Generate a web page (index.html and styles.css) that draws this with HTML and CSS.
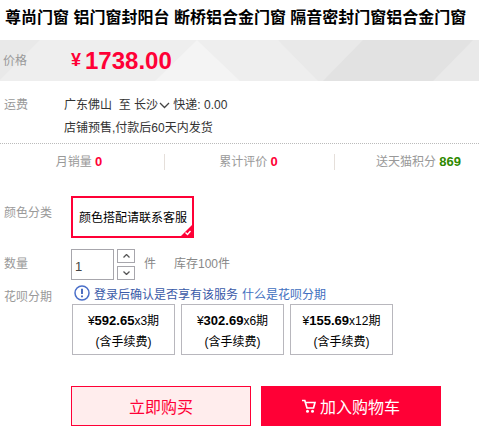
FILE: index.html
```html
<!DOCTYPE html>
<html lang="en">
<head>
    <meta charset="UTF-8">
    <title>尊尚门窗</title>
    <link rel="stylesheet" href="styles.css">
</head>
<body>

    <!-- Title -->
    <h1 class="title">尊尚门窗 铝门窗封阳台 断桥铝合金门窗 隔音密封门窗铝合金门窗</h1>

    <!-- Price -->
    <div class="price-bar">
        <svg class="price-bg" width="479" height="41" viewBox="0 0 479 41">
            <polygon points="0,0 40,0 0,40" fill="#e9e9e9"/>
            <polygon points="155,41 197,0 240,41" fill="#f4f4f4"/>
            <polygon points="278,0 479,0 479,41 318,41" fill="#e9e9e9"/>
            <polygon points="363,0 473,0 433,41 323,41" fill="#e2e2e2"/>
        </svg>
        <span class="price-label">价格</span>
        <span class="price-unit">¥</span>
        <span class="price-num">1738.00</span>
    </div>

    <!-- Shipping -->
    <div class="ship">
        <div class="ship-label">运费</div>
        <div class="ship-info">
            <div class="ship-line">广东佛山&nbsp; 至 长沙<svg class="chev" width="11" height="7" viewBox="0 0 11 7"><path d="M1 1l4.500 4.500L10 1" fill="none" stroke="#444" stroke-width="1.300"/></svg> 快递: 0.00</div>
            <div class="ship-line">店铺预售,付款后60天内发货</div>
        </div>
    </div>

    <!-- Stats -->
    <div class="stats">
        <div class="stat">月销量 <b class="red">0</b></div>
        <div class="stat">累计评价 <b class="red">0</b></div>
        <div class="stat">送天猫积分 <b class="green">869</b></div>
    </div>

    <!-- Color -->
    <div class="row color-row">
        <div class="row-label">颜色分类</div>
        <div class="sku">颜色搭配请联系客服
            <svg class="sku-tick" width="11" height="11" viewBox="0 0 11 11">
                <polygon points="11,0 11,11 0,11" fill="#ff0036"/>
                <path d="M4.500 7.500l2 2 3-3.500" fill="none" stroke="#fff" stroke-width="1.400"/>
            </svg>
        </div>
    </div>

    <!-- Quantity -->
    <div class="row qty-row">
        <div class="row-label">数量</div>
        <div class="qty-input">1</div>
        <div class="qty-btns">
            <div class="qty-btn"><svg width="7" height="4" viewBox="0 0 7 4"><path d="M.5 3.500l3-3 3 3" fill="none" stroke="#555" stroke-width="1.300"/></svg></div>
            <div class="qty-btn"><svg width="7" height="4" viewBox="0 0 7 4"><path d="M.5 .5l3 3 3-3" fill="none" stroke="#555" stroke-width="1.300"/></svg></div>
        </div>
        <span class="qty-unit">件</span>
        <span class="qty-stock">库存100件</span>
    </div>

    <!-- Installments -->
    <div class="row hb-row">
        <div class="row-label">花呗分期</div>
        <div class="hb-main">
            <div class="hb-note">
                <svg width="16" height="16" viewBox="0 0 16 16"><circle cx="8" cy="8" r="7" fill="none" stroke="#4a6fc9" stroke-width="1.500"/><path d="M8 3.800v5.200M8 10.400v1.800" stroke="#2f55b5" stroke-width="1.700"/></svg>
                <span>登录后确认是否享有该服务</span>
                <a href="#">什么是花呗分期</a>
            </div>
            <div class="hb-opts">
                <div class="hb-opt"><div>¥<b>592.65</b>x3期</div><div>(含手续费)</div></div>
                <div class="hb-opt"><div>¥<b>302.69</b>x6期</div><div>(含手续费)</div></div>
                <div class="hb-opt"><div>¥<b>155.69</b>x12期</div><div>(含手续费)</div></div>
            </div>
        </div>
    </div>

    <!-- Buttons -->
    <div class="actions">
        <a href="#" class="btn btn-buy">立即购买</a>
        <a href="#" class="btn btn-cart">
            <svg width="14" height="14" viewBox="0 0 14 14"><path d="M0 1.500h2.800L5 9h6.500L13 3.500H3.500" fill="none" stroke="#fff" stroke-width="1.700"/><circle cx="5.500" cy="12.300" r="1.500" fill="#fff"/><circle cx="10.500" cy="12.300" r="1.500" fill="#fff"/></svg>
            加入购物车
        </a>
    </div>

</body>
</html>
```

FILE: styles.css
```css
* {
    box-sizing: border-box;
}
body {
    font-family: "Liberation Sans", Arial, "Noto Sans CJK SC", sans-serif;
    font-size: 12px;
    color: #333;
    background: #fff;
    margin: 0;
    padding: 0;
    width: 479px;
    height: 436px;
    overflow: hidden;
}
/* Title */
.title {
    margin: 0;
    padding: 7px 0 0 5px;
    height: 40px;
    font-size: 16px;
    line-height: 22px;
    font-weight: bold;
    color: #000;
    white-space: nowrap;
}
/* Price */
.price-bar {
    position: relative;
    display: flex;
    align-items: center;
    height: 41px;
    background: #eeeeee;
    overflow: hidden;
}
.price-bg {
    position: absolute;
    left: 0;
    top: 0;
}
.price-label {
    position: relative;
    width: 71px;
    padding-left: 3px;
    padding-bottom: 2px;
    color: #999;
}
.price-unit {
    position: relative;
    font-size: 18px;
    font-weight: bold;
    color: #ff0036;
    margin-right: 4px;
}
.price-num {
    position: relative;
    font-size: 24px;
    font-weight: bold;
    color: #ff0036;
}
/* Shipping */
.ship {
    display: flex;
    height: 63px;
    padding-top: 13px;
    border-bottom: 1px dotted #bbb;
}
.ship-label {
    width: 64px;
    padding-left: 4px;
    line-height: 22px;
    color: #999;
}
.ship-line {
    line-height: 23px;
    white-space: nowrap;
}
.chev {
    margin-left: 1px;
}
/* Stats */
.stats {
    display: flex;
    height: 27px;
    margin-top: 10px;
    color: #999;
}
.stat {
    height: 16px;
    line-height: 16px;
    text-align: center;
    border-right: 1px solid #e5dfda;
    white-space: nowrap;
}
.stat b {
    font-size: 13px;
}
.stat:first-child {
    width: 165px;
    padding-right: 6px;
}
.stat:nth-child(2) {
    width: 170px;
    padding-right: 2px;
}
.stat:last-child {
    width: 144px;
    border-right: none;
    text-align: right;
    padding-right: 18px;
}
.red {
    color: #ff0036;
}
.green {
    color: #2f8a00;
}
/* Rows */
.row {
    display: flex;
}
.row-label {
    width: 71px;
    padding-left: 4px;
    color: #999;
    white-space: nowrap;
}
.color-row {
    margin-top: 15px;
    height: 53px;
}
.color-row .row-label {
    line-height: 34px;
}
.sku {
    position: relative;
    width: 123px;
    height: 42px;
    border: 2px solid #ff0036;
    padding: 1px 0 0 6px;
    line-height: 38px;
    color: #000;
    white-space: nowrap;
}
.sku-tick {
    position: absolute;
    right: 0;
    bottom: 0;
}
/* Quantity */
.qty-row {
    height: 31px;
    align-items: flex-start;
}
.qty-row .row-label {
    line-height: 30px;
}
.qty-input {
    width: 43px;
    height: 31px;
    border: 1px solid #a7a6ac;
    padding: 7px 0 0 3px;
    line-height: 20px;
    font-size: 13px;
    color: #444;
}
.qty-btns {
    display: flex;
    flex-direction: column;
    gap: 3px;
    margin-left: 3px;
}
.qty-btn {
    display: flex;
    align-items: center;
    justify-content: center;
    width: 18px;
    height: 14px;
    border: 1px solid #a7a6ac;
}
.qty-unit {
    margin-left: 9px;
    line-height: 30px;
    color: #888;
}
.qty-stock {
    margin-left: 18px;
    line-height: 30px;
    color: #888;
}
/* Installments */
.hb-row .row-label {
    line-height: 34px;
}
.hb-main {
    margin-left: 1px;
}
.hb-note {
    display: flex;
    align-items: center;
    gap: 4px;
    height: 16px;
    margin-top: 5px;
    padding-left: 2px;
    color: #3a5aa8;
    white-space: nowrap;
}
.hb-note a {
    color: #3f6fc0;
    text-decoration: none;
}
.hb-opts {
    display: flex;
    gap: 6px;
    margin-top: 3px;
}
.hb-opt {
    width: 103px;
    height: 51px;
    border: 1px solid #b8b7bd;
    text-align: center;
    color: #000;
    padding-top: 5px;
    line-height: 21px;
    white-space: nowrap;
}
.hb-opt b {
    font-size: 13px;
}
/* Buttons */
.actions {
    display: flex;
    gap: 10px;
    margin: 31px 0 0 71px;
}
.btn {
    display: flex;
    align-items: center;
    justify-content: center;
    width: 180px;
    height: 40px;
    font-size: 16px;
    text-decoration: none;
}
.btn-buy {
    background: #ffeded;
    border: 1px solid #ff0036;
    color: #ff0036;
}
.btn-cart {
    background: #ff0036;
    color: #fff;
    gap: 4px;
}
```
